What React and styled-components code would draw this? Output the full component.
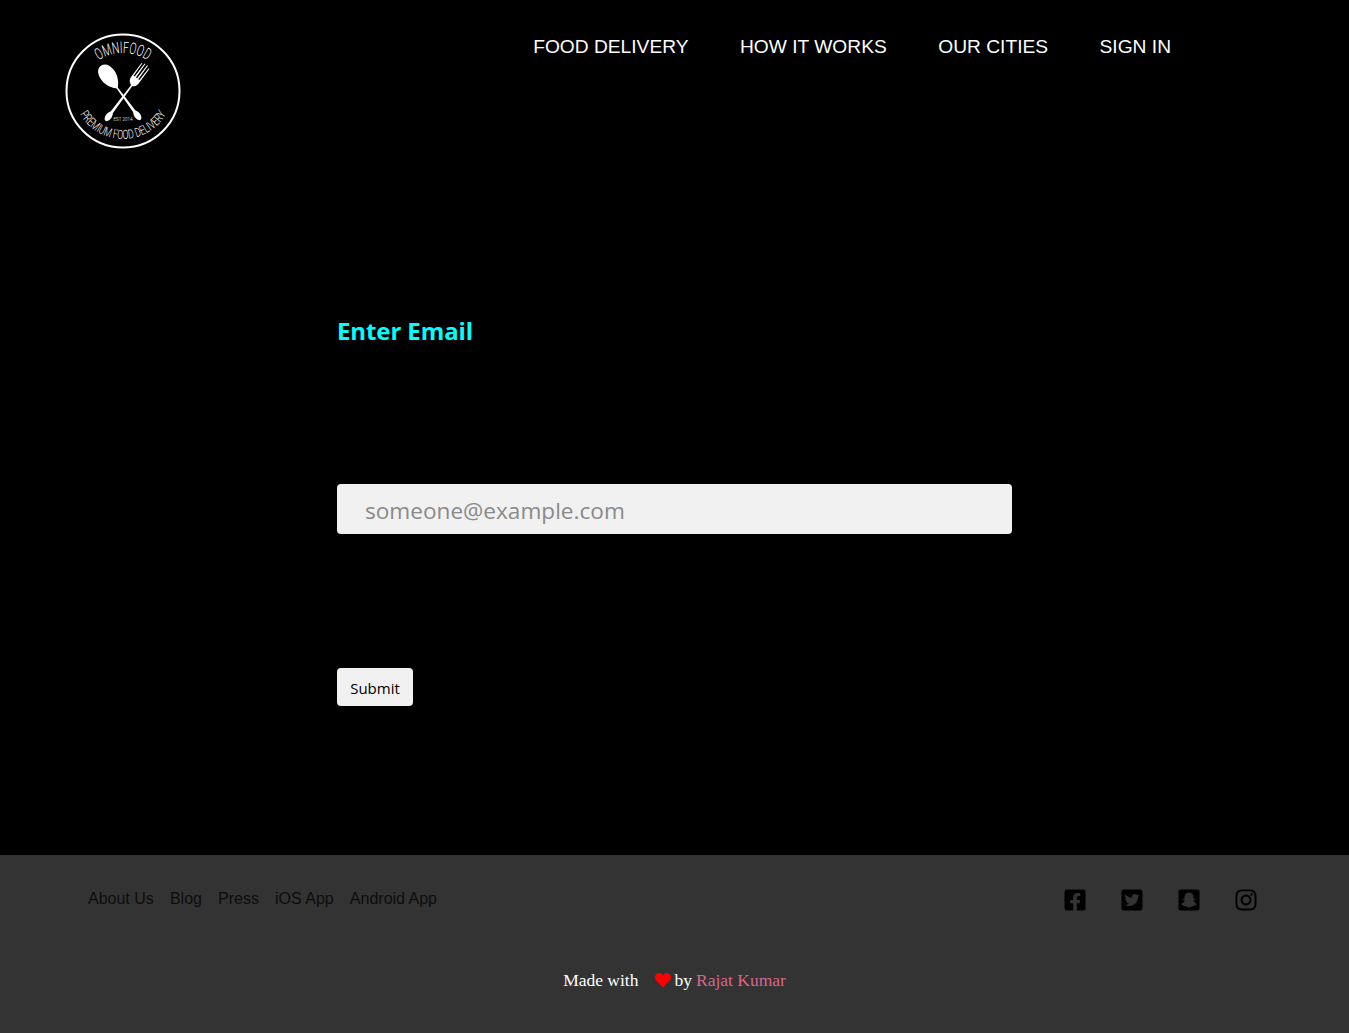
import React from 'react'
import styled, { createGlobalStyle } from 'styled-components'
import { FaFacebookSquare, FaTwitterSquare, FaSnapchatSquare, FaInstagram, FaHeart } from 'react-icons/fa'

const GlobalStyle = createGlobalStyle`
  * {
    box-sizing: border-box;
  }

  html, body {
    margin: 0;
    padding: 0;
    background: #000;
  }
`

const Page = styled.div`
  min-height: 1033px;
  display: flex;
  flex-direction: column;
  background: #000;
`

const Header = styled.header`
  height: 210px;
  padding: 33px 178px 0 65px;
  display: flex;
  justify-content: space-between;
  align-items: flex-start;
`

const Nav = styled.nav`
  display: flex;
  gap: 51.5px;
  padding-top: 3px;
`

const NavLink = styled.a`
  color: #fff;
  font-family: "Liberation Sans", Arial, sans-serif;
  font-size: 19.2px;
  line-height: 22px;
  text-transform: uppercase;
`

const Main = styled.main`
  flex: 1;
  width: 675px;
  margin: 0 auto;
  padding-top: 103px;
`

const Title = styled.h1`
  margin: 0 0 135px;
  height: 36px;
  color: #0ff;
  font-family: "Open Sans", "Noto Sans", sans-serif;
  font-size: 24px;
  font-weight: 700;
  line-height: 36px;
  letter-spacing: -0.1px;
`

const EmailInput = styled.input`
  display: block;
  width: 100%;
  height: 50px;
  padding: 2px 28px 0;
  border: none;
  border-radius: 4px;
  background: #f1f1f1;
  font-family: "Open Sans", "Noto Sans", sans-serif;
  font-size: 22.6px;
  outline: none;

  &::placeholder {
    color: #8a8a8a;
    opacity: 1;
  }
`

const SubmitButton = styled.button`
  display: block;
  width: 76px;
  height: 38px;
  margin-top: 134px;
  padding: 2px 0 0;
  border: none;
  border-radius: 4px;
  background: #f1f1f1;
  color: #000;
  font-family: "Open Sans", "Noto Sans", sans-serif;
  font-size: 15px;
`

const Footer = styled.footer`
  height: 178px;
  padding: 34px 91.5px 0 88px;
  background: #333;
`

const FooterTop = styled.div`
  display: flex;
  justify-content: space-between;
  align-items: flex-start;
`

const FooterLinks = styled.div`
  display: flex;
  gap: 16.1px;
`

const FooterLink = styled.a`
  color: #0d0d0d;
  font-family: "Liberation Sans", Arial, sans-serif;
  font-size: 16px;
  line-height: 20px;
`

const Socials = styled.div`
  display: flex;
  gap: 33px;
  margin-top: -1px;
  color: #000;
  font-size: 24px;

  svg {
    display: block;
  }
`

const Credit = styled.p`
  margin: 57px 0 0 -88px;
  width: 1349px;
  display: flex;
  justify-content: center;
  align-items: center;
  color: #fff;
  font-family: "Liberation Serif", serif;
  font-size: 17.5px;
  line-height: 22px;
`

const Heart = styled(FaHeart)`
  color: #f00;
  font-size: 16px;
  margin: 0 3px 0 17px;
`

const Author = styled.a`
  color: #d9668a;
  margin-left: 4px;
`

const BadgeText = styled.text`
  fill: #fff;
  font-family: Roboto, "Liberation Sans", sans-serif;
  font-weight: 300;
`

function Logo() {
  return (
    <svg width="116" height="116" viewBox="0 0 116 116" aria-label="Omnifood logo">
      <defs>
        <path id="arcTop" d="M 14 64 A 44 44 0 0 1 102 64" />
        <path id="arcBottom" d="M 8 56 A 50 50 0 0 0 108 56" />
      </defs>
      <circle cx="58" cy="58" r="56.5" fill="none" stroke="#fff" strokeWidth="2" />
      <BadgeText fontSize="16" textAnchor="middle">
        <textPath href="#arcTop" startOffset="50%" textLength="52" lengthAdjust="spacingAndGlyphs">OMNIFOOD</textPath>
      </BadgeText>
      <BadgeText fontSize="12.5" textAnchor="middle">
        <textPath href="#arcBottom" startOffset="50%" textLength="104" lengthAdjust="spacingAndGlyphs">PREMIUM FOOD DELIVERY</textPath>
      </BadgeText>
      <BadgeText x="58" y="88" fontSize="4.5" textAnchor="middle">EST 2014</BadgeText>
      {/* spoon */}
      <g transform="translate(75 86) rotate(-36.3)" fill="#fff">
        <ellipse cx="0" cy="-4.5" rx="3" ry="5.5" />
        <path d="M-1.4 -8 L-0.7 -40 L0.7 -40 L1.4 -8 Z" />
        <path d="M0 -38 C-3 -40 -8 -47 -8 -54 C-8 -62 -4.5 -66 0 -66 C4.5 -66 8 -62 8 -54 C8 -47 3 -40 0 -38 Z" />
      </g>
      {/* fork */}
      <g transform="translate(41 87) rotate(36.7)" fill="#fff">
        <ellipse cx="0" cy="-4.5" rx="3" ry="5.5" />
        <path d="M-1.4 -8 L-0.7 -44 L0.7 -44 L1.4 -8 Z" />
        <path d="M-0.7 -43 C-3.5 -44 -5.6 -46 -5.6 -50 L-5.6 -67 L-4.7 -67 L-4.3 -52 L-3 -52 L-2.8 -68.5 L-1.8 -68.5 L-1.4 -52 L0 -52 L0.3 -68.5 L1.3 -68.5 L1.5 -52 L2.9 -52 L3.3 -67 L4.3 -67 L4.4 -50 C4.4 -46 3.5 -44 0.7 -43 Z" />
      </g>
    </svg>
  )
}

const navItems = ['Food delivery', 'How it works', 'Our cities', 'Sign in']
const footerItems = ['About Us', 'Blog', 'Press', 'iOS App', 'Android App']

function App() {
  return (
    <Page>
      <GlobalStyle />
      <Header>
        <Logo />
        <Nav>
          {navItems.map((item) => (
            <NavLink key={item}>{item}</NavLink>
          ))}
        </Nav>
      </Header>

      <Main>
        <Title>Enter Email</Title>
        <EmailInput type="email" placeholder="someone@example.com" />
        <SubmitButton>Submit</SubmitButton>
      </Main>

      <Footer>
        <FooterTop>
          <FooterLinks>
            {footerItems.map((item) => (
              <FooterLink key={item}>{item}</FooterLink>
            ))}
          </FooterLinks>
          <Socials>
            <FaFacebookSquare />
            <FaTwitterSquare />
            <FaSnapchatSquare />
            <FaInstagram />
          </Socials>
        </FooterTop>
        <Credit>
          Made with <Heart /> by <Author>Rajat Kumar</Author>
        </Credit>
      </Footer>
    </Page>
  )
}

export default App
